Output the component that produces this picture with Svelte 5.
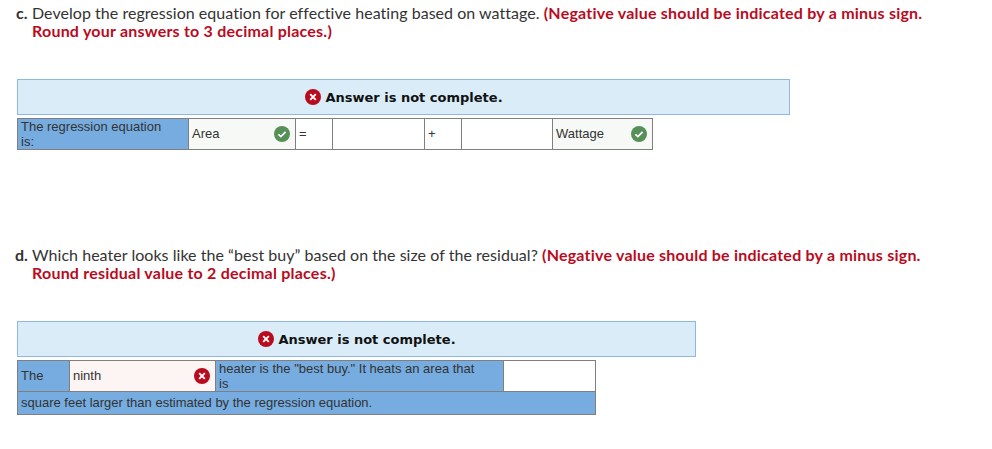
<script>
	const xPath = 'M5.2 5.2l5.6 5.6M10.8 5.2l-5.6 5.6';
	const checkPath = 'M4.4 8.3l2.5 2.3 4.7-4.8';
</script>

{#snippet wrong()}
	<svg class="icon" viewBox="0 0 16 16"><circle cx="8" cy="8" r="8" fill="#b90b1e" /><path d={xPath} stroke="#fff" stroke-width="1.9" fill="none" /></svg>
{/snippet}

{#snippet right()}
	<svg class="icon" viewBox="0 0 16 16"><circle cx="8" cy="8" r="8" fill="#568f57" /><path d={checkPath} stroke="#fff" stroke-width="1.7" fill="none" /></svg>
{/snippet}

<main class="page">
	<section class="part part-c">
		<p class="question">
			<span class="mark">c.</span>
			<span class="body">Develop the regression equation for effective heating based on wattage. <strong>(Negative value should be indicated by a minus sign. Round your answers to 3 decimal places.)</strong></span>
		</p>
		<div class="banner banner-c">{@render wrong()}<span>Answer is not complete.</span></div>
		<table class="answers table-c">
			<tbody>
				<tr>
					<td class="label c-label">The regression equation is:</td>
					<td class="graded ok c-area"><div class="cell-row"><span>Area</span>{@render right()}</div></td>
					<td class="op">=</td>
					<td class="blank c-blank"></td>
					<td class="op">+</td>
					<td class="blank c-blank2"></td>
					<td class="graded ok c-watt"><div class="cell-row"><span>Wattage</span>{@render right()}</div></td>
				</tr>
			</tbody>
		</table>
	</section>

	<section class="part part-d">
		<p class="question">
			<span class="mark">d.</span>
			<span class="body">Which heater looks like the “best buy” based on the size of the residual? <strong>(Negative value should be indicated by a minus sign. Round residual value to 2 decimal places.)</strong></span>
		</p>
		<div class="banner banner-d">{@render wrong()}<span>Answer is not complete.</span></div>
		<table class="answers table-d">
			<tbody>
				<tr class="row-top">
					<td class="label d-the">The</td>
					<td class="graded bad d-ninth"><div class="cell-row"><span>ninth</span>{@render wrong()}</div></td>
					<td class="label d-heater">heater is the "best buy." It heats an area that is</td>
					<td class="blank d-blank"></td>
				</tr>
				<tr class="row-bottom">
					<td class="label" colspan="4">square feet larger than estimated by the regression equation.</td>
				</tr>
			</tbody>
		</table>
	</section>
</main>

<style>
	:global(body) {
		background: #fff;
	}

	.page {
		width: 992px;
		height: 449px;
		box-sizing: border-box;
		padding: 4px 0 0 16px;
		overflow: hidden;
	}

	.part-d {
		margin-top: 96px;
	}

	.question {
		display: flex;
		margin: 0;
		width: 920px;
		font-family: Lato, sans-serif;
		font-size: 16px;
		line-height: 18px;
		letter-spacing: 0.04px;
		color: #333;
	}

	.mark {
		width: 16px;
		flex: none;
		font-weight: 700;
	}

	.part-d .question {
		margin-left: -1px;
		width: 921px;
	}

	.part-d .mark {
		width: 17px;
	}

	.question strong {
		color: #b90b1e;
		font-weight: 700;
		letter-spacing: 0.22px;
	}

	.banner {
		display: flex;
		align-items: center;
		justify-content: center;
		gap: 4px;
		box-sizing: border-box;
		height: 36px;
		margin: 39px 0 3px 1px;
		padding-left: 1px;
		background: #d9ecf8;
		border: 1px solid #8fb8de;
		font-family: 'DejaVu Sans', sans-serif;
		font-size: 13px;
		font-weight: 700;
		color: #111;
	}

	.banner-c {
		width: 773px;
	}

	.banner-d {
		width: 679px;
	}

	.icon {
		width: 16px;
		height: 16px;
		flex: none;
	}

	.answers {
		margin-left: 1px;
		border-collapse: collapse;
		table-layout: fixed;
		font-family: 'Liberation Sans', sans-serif;
		font-size: 13px;
		line-height: 15px;
		color: #333;
	}

	.answers td {
		border: 1px solid #7f7f7f;
		padding: 0 3px;
		box-sizing: border-box;
	}

	.table-c {
		width: 636px;
		height: 32px;
	}

	.table-d {
		width: 579px;
	}

	.label {
		background: #76acdf;
	}

	.graded.ok {
		background: #f6f9f6;
	}

	.graded.bad {
		background: #fdf5f4;
	}

	.answers .graded {
		padding-right: 5px;
	}

	.cell-row {
		display: flex;
		align-items: center;
		justify-content: space-between;
	}

	.cell-row span {
		padding-bottom: 2px;
	}

	.answers .c-label {
		width: 171px;
		padding-right: 20px;
	}

	.c-area {
		width: 107px;
	}

	.answers .op {
		width: 37px;
		padding-bottom: 2px;
	}

	.c-blank {
		width: 92px;
	}

	.c-blank2 {
		width: 91px;
	}

	.c-watt {
		width: 100px;
	}

	.answers .d-the {
		width: 52px;
		padding-bottom: 2px;
	}

	.d-ninth {
		width: 146px;
	}

	.answers .d-heater {
		width: 288px;
		padding-right: 20px;
	}

	.d-blank {
		width: 92px;
		background: #fff;
	}

	.row-top {
		height: 31px;
	}

	.row-bottom {
		height: 23px;
	}

	.answers .row-bottom td {
		padding-bottom: 2px;
	}
</style>
